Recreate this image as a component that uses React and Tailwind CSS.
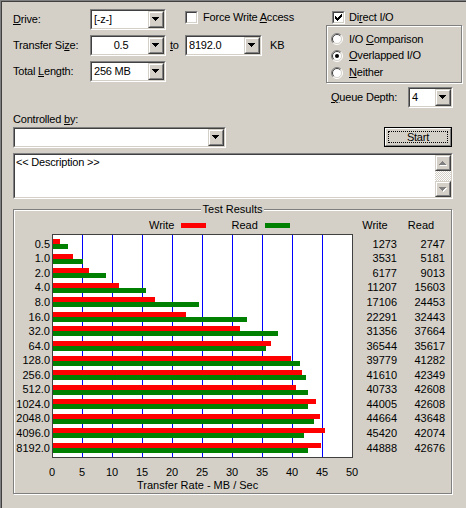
import React from "react";

const sizes = ["0.5","1.0","2.0","4.0","8.0","16.0","32.0","64.0","128.0","256.0","512.0","1024.0","2048.0","4096.0","8192.0"];
const writes = [1273,3531,6177,11207,17106,22291,31356,36544,39779,41610,40733,44005,44664,45420,44888];
const reads = [2747,5181,9013,15603,24453,32443,37664,35617,41282,42349,42608,42608,43648,42074,42676];

function Sunken({ className = "", children }) {
  return (
    <div className={`border border-t-[#808080] border-l-[#808080] border-r-white border-b-white ${className}`}>
      <div className="flex h-full w-full border border-t-[#404040] border-l-[#404040] border-r-[#d4d0c8] border-b-[#d4d0c8] bg-white">
        {children}
      </div>
    </div>
  );
}

function Raised({ className = "", children }) {
  return (
    <div className={`border border-t-[#d4d0c8] border-l-[#d4d0c8] border-r-[#404040] border-b-[#404040] bg-[#d4d0c8] ${className}`}>
      <div className="flex h-full w-full items-center justify-center border border-t-white border-l-white border-r-[#808080] border-b-[#808080]">
        {children}
      </div>
    </div>
  );
}

function DownArrow({ color = "#000", shadow = false }) {
  const tri = (dx, dy, c) => (
    <g fill={c}>
      <rect x={0 + dx} y={0 + dy} width="7" height="1" />
      <rect x={1 + dx} y={1 + dy} width="5" height="1" />
      <rect x={2 + dx} y={2 + dy} width="3" height="1" />
      <rect x={3 + dx} y={3 + dy} width="1" height="1" />
    </g>
  );
  return (
    <svg width="8" height="5" viewBox="0 0 8 5" shapeRendering="crispEdges" className="block">
      {shadow && tri(1, 1, "#ffffff")}
      {tri(0, 0, color)}
    </svg>
  );
}

function UpArrow({ color = "#808080", shadow = true }) {
  const tri = (dx, dy, c) => (
    <g fill={c}>
      <rect x={3 + dx} y={0 + dy} width="1" height="1" />
      <rect x={2 + dx} y={1 + dy} width="3" height="1" />
      <rect x={1 + dx} y={2 + dy} width="5" height="1" />
      <rect x={0 + dx} y={3 + dy} width="7" height="1" />
    </g>
  );
  return (
    <svg width="8" height="5" viewBox="0 0 8 5" shapeRendering="crispEdges" className="block">
      {shadow && tri(1, 1, "#ffffff")}
      {tri(0, 0, color)}
    </svg>
  );
}

function Combo({ w, text, center = false }) {
  return (
    <Sunken className={`h-[21px] shrink-0 ${w}`}>
      <div className={`flex-1 pl-[2px] leading-[17px] ${center ? "text-center" : ""}`}>{text}</div>
      <Raised className="h-[17px] w-[16px] shrink-0">
        <DownArrow />
      </Raised>
    </Sunken>
  );
}

function Checkbox({ checked }) {
  return (
    <Sunken className="h-[13px] w-[13px] shrink-0">
      {checked && (
        <svg width="9" height="9" viewBox="0 0 9 9" shapeRendering="crispEdges" className="block">
          <g fill="#000">
            <rect x="7" y="1" width="1" height="1" />
            <rect x="6" y="2" width="2" height="1" />
            <rect x="1" y="3" width="1" height="1" />
            <rect x="5" y="3" width="3" height="1" />
            <rect x="1" y="4" width="2" height="1" />
            <rect x="4" y="4" width="3" height="1" />
            <rect x="1" y="5" width="5" height="1" />
            <rect x="2" y="6" width="3" height="1" />
            <rect x="3" y="7" width="1" height="1" />
          </g>
        </svg>
      )}
    </Sunken>
  );
}

function Radio({ checked }) {
  return (
    <svg width="12" height="12" viewBox="0 0 12 12" className="block shrink-0">
      <circle cx="6" cy="6" r="5" fill="#ffffff" />
      <path d="M2.1 9.9 A5.5 5.5 0 0 1 9.9 2.1" stroke="#808080" fill="none" />
      <path d="M9.9 2.1 A5.5 5.5 0 0 1 2.1 9.9" stroke="#ffffff" fill="none" />
      <path d="M2.8 9.2 A4.5 4.5 0 0 1 9.2 2.8" stroke="#404040" fill="none" />
      <path d="M9.2 2.8 A4.5 4.5 0 0 1 2.8 9.2" stroke="#d4d0c8" fill="none" />
      {checked && <circle cx="6" cy="6" r="2" fill="#000" />}
    </svg>
  );
}

function U({ children }) {
  return <span className="underline underline-offset-[1px]">{children}</span>;
}

function Chart() {
  return (
    <svg width="301" height="224" viewBox="0 0 301 224" shapeRendering="crispEdges" className="block shrink-0">
      <rect x="0" y="0" width="301" height="224" fill="#404040" />
      <rect x="1" y="1" width="299" height="222" fill="#ffffff" />
      {[1, 2, 3, 4, 5, 6, 7, 8, 9].map((k) => (
        <rect key={k} x={30 * k} y="1" width="1" height="222" fill="#0000ff" />
      ))}
      {sizes.map((s, i) => {
        const y = 5 + Math.round(i * 14.57);
        return (
          <g key={s}>
            <rect x="1" y={y} width={Math.round(writes[i] * 0.006) - 1} height="5" fill="#ff0000" />
            <rect x="1" y={y + 5} width={Math.round(reads[i] * 0.006) - 1} height="5" fill="#008000" />
          </g>
        );
      })}
    </svg>
  );
}

export default function App() {
  return (
    <div className="h-[508px] w-[466px] overflow-hidden bg-[#d4d0c8] font-['Liberation_Sans',Arial,sans-serif] text-[11px] leading-[13px] text-black">
      <div className="h-full border-t border-l border-[#808080]">
        <div className="h-full border-t border-l border-[#404040] pl-[11px] pt-[7px] tracking-[-0.2px]">
          {/* Top section */}
          <div className="flex items-start">
            <div className="flex w-[313px] shrink-0 flex-col gap-[5px]">
              <div className="flex h-[21px] items-center">
                <div className="w-[77px] shrink-0"><U>D</U>rive:</div>
                <Combo w="w-[76px]" text="[-z-]" />
                <div className="ml-[19px] mt-[2px] flex items-center gap-[5px] self-start">
                  <Checkbox checked={false} />
                  <span className="whitespace-nowrap">Force Write <U>A</U>ccess</span>
                </div>
              </div>
              <div className="flex h-[21px] items-center">
                <div className="w-[77px] shrink-0">Transfer Si<U>z</U>e:</div>
                <Combo w="w-[76px]" text="0.5" center />
                <div className="ml-[4px] w-[15px] shrink-0"><U>t</U>o</div>
                <Combo w="w-[77px]" text="8192.0" />
                <div className="ml-[8px]">KB</div>
              </div>
              <div className="flex h-[21px] items-center">
                <div className="w-[77px] shrink-0">Total <U>L</U>ength:</div>
                <Combo w="w-[76px]" text="256 MB" />
              </div>
            </div>
            <div className="flex w-[137px] shrink-0 flex-col">
              <div className="flex h-[16px] items-start gap-[4px] pl-[6px] pt-[2px]">
                <Checkbox checked />
                <span className="whitespace-nowrap">Di<U>r</U>ect I/O</span>
              </div>
              <div className="flex h-[58px] w-[136px] flex-col border border-[#808080] pl-[4px] pt-[5px] shadow-[inset_1px_1px_0_#fff,1px_1px_0_#fff]">
                <div className="flex h-[16px] items-center gap-[6px]">
                  <Radio checked={false} />
                  <span className="whitespace-nowrap">I/O <U>C</U>omparison</span>
                </div>
                <div className="flex h-[17px] items-center gap-[6px]">
                  <Radio checked />
                  <span className="whitespace-nowrap"><U>O</U>verlapped I/O</span>
                </div>
                <div className="flex h-[17px] items-center gap-[6px]">
                  <Radio checked={false} />
                  <span className="whitespace-nowrap"><U>N</U>either</span>
                </div>
              </div>
              <div className="mt-[4px] flex h-[21px] items-center pl-[5px]">
                <div className="w-[77px] shrink-0 whitespace-nowrap"><U>Q</U>ueue Depth:</div>
                <Combo w="w-[45px]" text="4" />
              </div>
            </div>
          </div>

          {/* Controlled by */}
          <div className="mt-[4px] h-[14px] leading-[14px]">Controlled <U>b</U>y:</div>
          <div className="mt-[1px] flex w-[440px] items-start">
            <Combo w="w-[213px]" text="" />
            <div className="ml-auto mr-[1px] h-[20px] w-[68px] border border-black">
              <div className="h-full w-full border border-t-white border-l-white border-r-[#808080] border-b-[#808080] p-[2px]">
                <div className="flex h-full items-center justify-center border border-dotted border-black leading-[12px]">
                  Start
                </div>
              </div>
            </div>
          </div>

          {/* Description */}
          <Sunken className="mt-[5px] h-[46px] w-[440px]">
            <div className="flex-1 pl-[1px] pt-[1px] leading-[13px]">&lt;&lt; Description &gt;&gt;</div>
            <div className="flex w-[16px] shrink-0 flex-col">
              <Raised className="h-[16px] w-[16px]">
                <UpArrow />
              </Raised>
              <div className="flex-1 bg-[image:repeating-conic-gradient(#ffffff_0%_25%,#d4d0c8_0%_50%)] bg-[length:2px_2px]" />
              <Raised className="h-[16px] w-[16px]">
                <DownArrow color="#808080" shadow />
              </Raised>
            </div>
          </Sunken>

          {/* Test Results */}
          <div className="relative mt-[10px] h-[285px] w-[439px] border border-[#808080] pt-[8px] tracking-normal shadow-[inset_1px_1px_0_#fff,1px_1px_0_#fff]">
            <div className="absolute -top-[8px] left-0 right-0 flex justify-center">
              <span className="bg-[#d4d0c8] px-[2px] leading-[14px]">Test Results</span>
            </div>
            <div className="flex h-[14px] items-center">
              <div className="flex w-[339px] shrink-0 items-center pl-[135px]">
                <span>Write</span>
                <span className="ml-[7px] h-[5px] w-[25px] bg-[#ff0000]" />
                <span className="ml-[25px]">Read</span>
                <span className="ml-[7px] h-[5px] w-[25px] bg-[#008000]" />
              </div>
              <div className="w-[44px] shrink-0 text-center">Write</div>
              <div className="w-[48px] shrink-0 text-center">Read</div>
            </div>
            <div className="mt-[2px] flex">
              <div className="w-[38px] shrink-0 pr-[2px] pt-[2.7px] text-right">
                {sizes.map((s) => (
                  <div key={s} className="h-[14.57px] leading-[14.57px]">{s}</div>
                ))}
              </div>
              <Chart />
              <div className="w-[44px] shrink-0 pt-[2.7px] text-right">
                {writes.map((v, i) => (
                  <div key={i} className="h-[14.57px] leading-[14.57px]">{v}</div>
                ))}
              </div>
              <div className="w-[48px] shrink-0 pt-[2.7px] text-right">
                {reads.map((v, i) => (
                  <div key={i} className="h-[14.57px] leading-[14.57px]">{v}</div>
                ))}
              </div>
            </div>
            <div className="mt-[8px] flex h-[13px] pl-[23px] leading-[13px]">
              {[0, 5, 10, 15, 20, 25, 30, 35, 40, 45, 50].map((v) => (
                <div key={v} className="w-[30px] shrink-0 text-center">{v}</div>
              ))}
            </div>
            <div className="h-[13px] whitespace-nowrap pl-[123px] leading-[13px]">Transfer Rate - MB / Sec</div>
          </div>
        </div>
      </div>
    </div>
  );
}
